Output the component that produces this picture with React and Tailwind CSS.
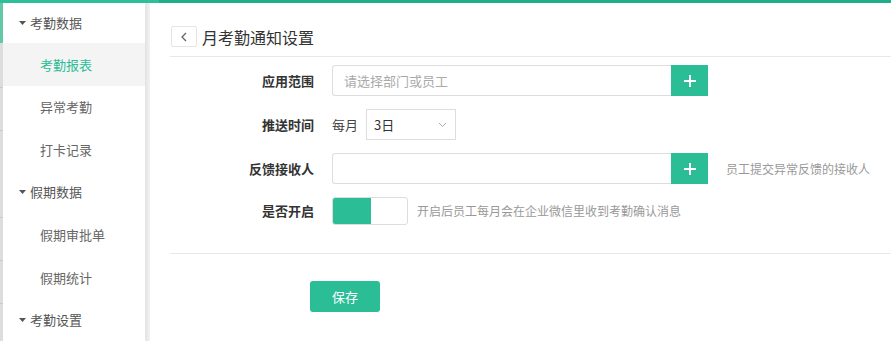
import React from 'react';

const font = { fontFamily: '"Noto Sans CJK SC", "Noto Sans", sans-serif' };

const menu = [
  { label: '考勤数据', group: true, h: 'h-[40px]' },
  { label: '考勤报表', active: true },
  { label: '异常考勤' },
  { label: '打卡记录' },
  { label: '假期数据', group: true },
  { label: '假期审批单' },
  { label: '假期统计' },
  { label: '考勤设置', group: true },
];

function Caret() {
  return (
    <svg width="7" height="4" viewBox="0 0 7 4" className="mr-[4px]">
      <path d="M0 0 L7 0 L3.5 4 Z" fill="#555" />
    </svg>
  );
}

function PlusButton() {
  return (
    <button className="flex h-[31px] w-[37px] items-center justify-center bg-[#2bbd96]">
      <svg width="12" height="12" viewBox="0 0 12 12">
        <path d="M6 0 V12 M0 6 H12" stroke="#fff" strokeWidth="2" />
      </svg>
    </button>
  );
}

function Label({ children }) {
  return <div className="w-[145px] pr-[1px] text-right text-[13px] font-bold text-[#333]">{children}</div>;
}

export default function App() {
  return (
    <div className="flex h-[341px] w-[891px] flex-col overflow-hidden bg-white" style={font}>
      <div className="flex h-[3px] shrink-0">
        <div className="w-[159px] bg-[#2cbf99]" />
        <div className="flex-1 bg-[#1fae8a]" />
      </div>
      <div className="flex flex-1">
        {/* left strip */}
        <div className="flex w-[3px] flex-col">
          <div className="h-[40px] bg-[#62c8a8]" />
          <div className="h-[44px] bg-[#dcdddf]" />
          <div className="h-[43px] border-t border-[#c9cacc] bg-[#dcdddf]" />
          <div className="h-[43px] border-t border-[#c9cacc] bg-[#dcdddf]" />
          <div className="h-[44px] bg-[#dcdddf]" />
          <div className="h-[43px] border-t border-[#c9cacc] bg-[#dcdddf]" />
          <div className="h-[43px] border-t border-[#c9cacc] bg-[#dcdddf]" />
          <div className="flex-1 border-t border-[#c9cacc] bg-[#dcdddf]" />
        </div>

        {/* sidebar */}
        <div className="flex w-[142px] flex-col">
          {menu.map((m) => (
            <div
              key={m.label}
              className={`flex ${m.h || 'h-[42.6px]'} shrink-0 items-center text-[13px] ${
                m.group ? 'pl-[16px]' : 'pl-[37px]'
              } ${m.active ? 'bg-[#f4f4f4] text-[#2bbd96]' : m.group ? 'text-[#555]' : 'text-[#666]'}`}
            >
              {m.group && <Caret />}
              {m.label}
            </div>
          ))}
        </div>
        <div className="w-[5px] bg-gradient-to-r from-[#e2e2e2] to-[#f3f3f3]" />

        {/* main */}
        <div className="flex flex-1 flex-col pl-[20px]">
          <div className="flex h-[54px] items-center border-b border-[#e8e8e8] pt-[14px]">
            <button className="ml-[1px] flex h-[21px] w-[26px] items-center justify-center rounded-[2px] border border-[#e5e5e5]">
              <svg width="6" height="10" viewBox="0 0 6 10">
                <path d="M5 1 L1 5 L5 9" stroke="#666" strokeWidth="1.3" fill="none" />
              </svg>
            </button>
            <span className="ml-[5px] text-[16px] text-[#333]">月考勤通知设置</span>
          </div>

          <div className="flex flex-col pt-[8px]">
            <div className="flex h-[31px] items-center">
              <Label>应用范围</Label>
              <div className="ml-[17px] flex">
                <div className="flex h-[31px] w-[339px] items-center rounded-l-[3px] border border-r-0 border-[#ddd] pl-[11px] text-[13px] text-[#aaa]">
                  请选择部门或员工
                </div>
                <PlusButton />
              </div>
            </div>

            <div className="mt-[13px] flex h-[31px] items-center">
              <Label>推送时间</Label>
              <span className="ml-[17px] text-[13px] text-[#444]">每月</span>
              <div className="ml-[8px] flex h-[31px] w-[90px] items-center justify-between border border-[#ddd] pl-[7px] pr-[8px] text-[13px] text-[#333]">
                3日
                <svg width="9" height="6" viewBox="0 0 9 6">
                  <path d="M1 1 L4.5 4.5 L8 1" stroke="#aaa" strokeWidth="1" fill="none" />
                </svg>
              </div>
            </div>

            <div className="mt-[13px] flex h-[31px] items-center">
              <Label>反馈接收人</Label>
              <div className="ml-[17px] flex">
                <div className="h-[31px] w-[339px] rounded-l-[3px] border border-r-0 border-[#ddd]" />
                <PlusButton />
              </div>
              <span className="ml-[18px] text-[12px] text-[#999]">员工提交异常反馈的接收人</span>
            </div>

            <div className="mt-[13px] flex h-[28px] items-center">
              <Label>是否开启</Label>
              <div className="ml-[17px] flex h-[28px] w-[76px] overflow-hidden rounded-[3px] border border-[#ddd]">
                <div className="w-[38px] bg-[#2bbd96]" />
              </div>
              <span className="ml-[9px] text-[12px] text-[#999]">开启后员工每月会在企业微信里收到考勤确认消息</span>
            </div>
          </div>

          <div className="mt-[28px] border-b border-[#e8e8e8]" />

          <div className="mt-[27px] pl-[140px]">
            <button className="flex h-[31px] w-[70px] items-center justify-center rounded-[3px] bg-[#2bbd96] text-[13px] text-white">
              保存
            </button>
          </div>
        </div>
      </div>
    </div>
  );
}
